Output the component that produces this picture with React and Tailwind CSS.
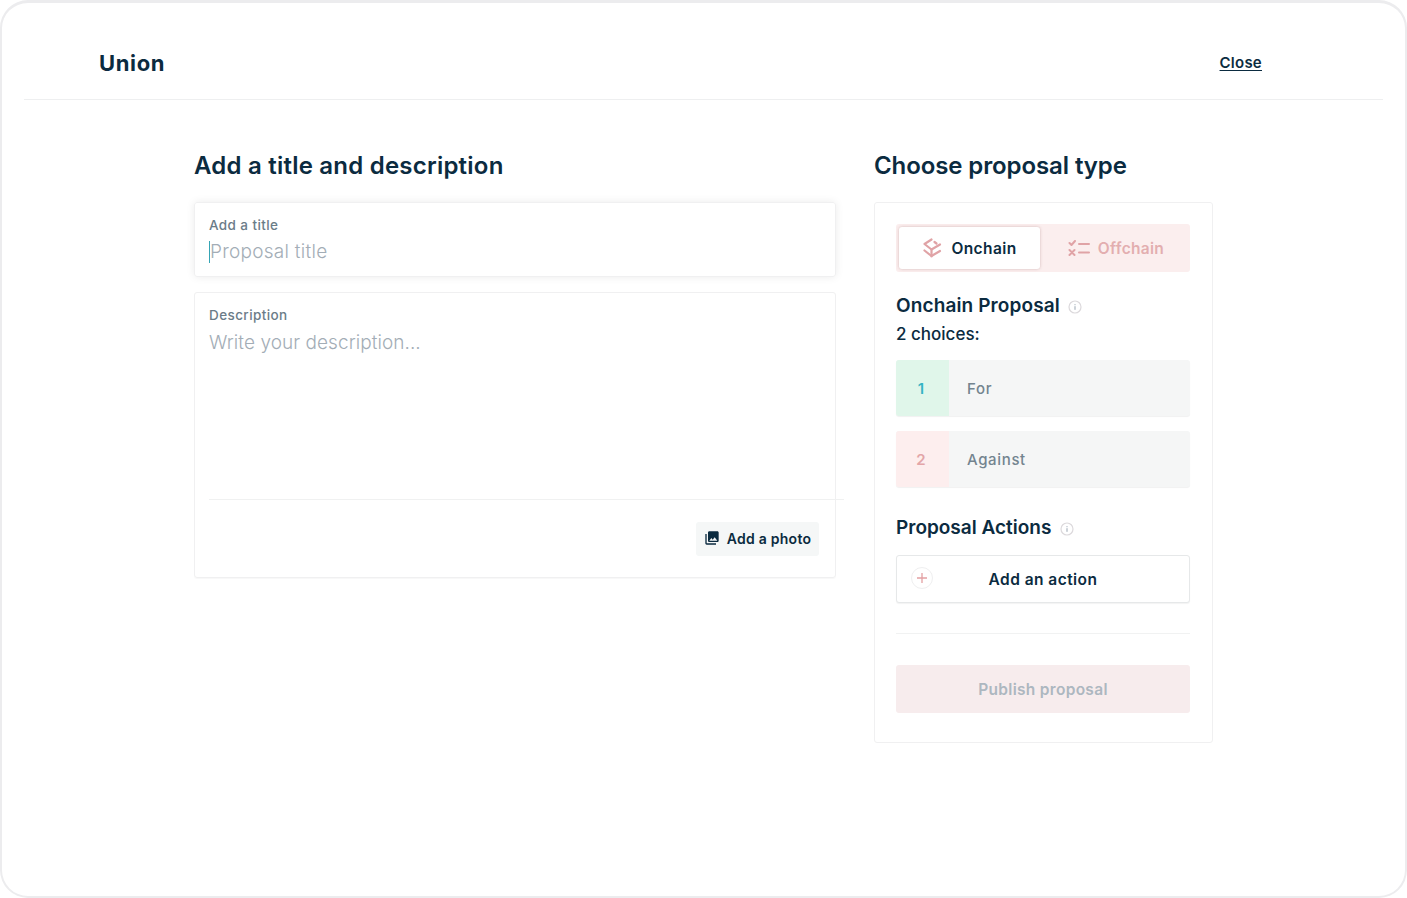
import React from "react";
import { MdPhotoLibrary } from "react-icons/md";

function Info() {
  return (
    <svg width="14" height="14" viewBox="0 0 14 14" fill="none">
      <circle cx="7" cy="7" r="6" stroke="#dcd9dc" strokeWidth="1.2" />
      <rect x="6.5" y="6.2" width="1" height="3.6" fill="#9aa5b1" />
      <rect x="6.5" y="4.2" width="1" height="1" fill="#9aa5b1" />
    </svg>
  );
}

function OnchainIcon() {
  return (
    <svg width="20" height="20" viewBox="0 0 20 20" fill="none" stroke="#e0a3a6" strokeWidth="2.2" strokeLinecap="round" strokeLinejoin="round">
      <path d="M9.5 1.5 L2.5 6 L9.5 11.5 L18 6.5" />
      <path d="M2.5 12.5 L9.5 18 L18 13" />
      <path d="M9.5 11.5 V18.5" />
      <path d="M12.5 4 L14.5 5.5" />
    </svg>
  );
}

function OffchainIcon() {
  return (
    <svg width="22" height="16" viewBox="0 0 22 16" fill="none" stroke="#e0a3a6" strokeWidth="2" strokeLinecap="round" strokeLinejoin="round">
      <path d="M1.5 3 L3.5 5 L7 1" />
      <path d="M1.5 10 L6.5 15 M6.5 10 L1.5 15" />
      <path d="M11 4 H21 M11 12.5 H21" />
    </svg>
  );
}

function Choice({ n, label, numBg, numColor }) {
  return (
    <div className="flex h-14 overflow-hidden rounded-[3px] bg-[#f5f6f6] shadow-[0_1px_1px_rgba(0,0,0,0.06)]">
      <div className={`flex w-[53px] items-center justify-center pt-[2px] pr-[3px] text-[15px] font-semibold ${numBg} ${numColor}`}>{n}</div>
      <div className="flex items-center pt-[2px] pl-[18px] text-[15px] font-medium tracking-[0.65px] text-[#73848f]">{label}</div>
    </div>
  );
}

export default function App() {
  return (
    <div className="h-[898px] w-[1407px] overflow-hidden rounded-[28px] border-2 border-t-[3px] border-[#ececee] bg-white px-[22px] font-['Inter','Noto_Sans',sans-serif] text-[#0b2b40]">
      <header className="flex h-[97px] items-center justify-between border-b border-[#eeeff0] pt-[24px] pr-[121px] pl-[75px]">
        <div className="text-[22px] font-bold tracking-[0.65px]">Union</div>
        <a className="text-[15px] font-semibold tracking-[0.25px] underline underline-offset-2">Close</a>
      </header>
      <main className="flex gap-[38px] pt-[50px] pl-[170px]">
        <section className="w-[642px]">
          <h2 className="h-[32px] text-[24px] leading-[32px] font-semibold tracking-[0.22px]">Add a title and description</h2>
          <div className="mt-[20px] h-[75px] rounded-[3px] border border-[#f0f0f1] px-[14px] pt-[13px] shadow-[0_0_8px_rgba(0,0,0,0.08)]">
            <div className="text-[13.5px] leading-[18px] font-medium tracking-[0.4px] text-[#6b7c88]">Add a title</div>
            <div className="mt-[6px] flex h-[24px] items-center">
              <span className="h-[22px] w-[1px] bg-[#35a5b5]"></span>
              <span className="text-[19px] font-light tracking-[0.27px] text-[#a3adb6]">Proposal title</span>
            </div>
          </div>
          <div className="mt-[15px] h-[286px] rounded-[3px] border border-[#f0f0f1] pt-[13px] shadow-[0_1px_1px_rgba(0,0,0,0.03)]">
            <div className="px-[14px] text-[13.5px] leading-[18px] font-medium tracking-[0.4px] text-[#6b7c88]">Description</div>
            <div className="mt-[7px] px-[14px] text-[19px] leading-[24px] font-light tracking-[0.06px] text-[#a3adb6]">Write your description...</div>
            <div className="mt-[144px] mr-[-9px] ml-[14px] border-t border-[#f0f1f1]"></div>
            <div className="flex justify-end pt-[22px] pr-[16px]">
              <button className="flex h-[34px] w-[123px] items-center justify-center gap-[7px] rounded-[3px] bg-[#f5f7f7] pb-[2px] text-[14px] font-semibold tracking-[0.25px]">
                <MdPhotoLibrary size={16} color="#0b2b40" />
                Add a photo
              </button>
            </div>
          </div>
        </section>
        <section className="w-[339px]">
          <h2 className="h-[32px] text-[24px] leading-[32px] font-semibold tracking-[-0.1px]">Choose proposal type</h2>
          <div className="mt-[20px] h-[541px] rounded-[3px] border border-[#f0f0f1] pt-[21px] pr-[22px] pl-[21px]">
            <div className="flex h-[48px] rounded-[3px] bg-[#fbeeee] p-[3px]">
              <div className="flex h-[42px] w-[141px] items-center justify-center gap-[9px] rounded-[3px] bg-white text-[15.5px] font-semibold tracking-[0.4px] shadow-[0_0_3px_rgba(120,60,60,0.3)]">
                <OnchainIcon />
                <span className="pt-[2px]">Onchain</span>
              </div>
              <div className="flex flex-1 items-center justify-center gap-[8px] pl-[5px] text-[15.5px] font-semibold tracking-[0.3px] text-[#e3aeb0]">
                <OffchainIcon />
                <span className="pt-[2px]">Offchain</span>
              </div>
            </div>
            <div className="mt-[21px] flex h-[24px] items-center gap-[8px] pt-[3px]">
              <span className="text-[19px] font-semibold tracking-[0.12px]">Onchain Proposal</span>
              <Info />
            </div>
            <div className="mt-[5px] h-[24px] text-[17px] leading-[24px] font-medium">2 choices:</div>
            <div className="mt-[14px] flex flex-col gap-[15px]">
              <Choice n="1" label="For" numBg="bg-[#e0f6ea]" numColor="text-[#35b4c4]" />
              <Choice n="2" label="Against" numBg="bg-[#fdeeee]" numColor="text-[#e3a5a8]" />
            </div>
            <div className="mt-[28px] flex h-[24px] items-center gap-[9px] pt-[3px]">
              <span className="text-[19px] font-semibold">Proposal Actions</span>
              <Info />
            </div>
            <button className="relative mt-[16px] flex h-[48px] w-full items-center justify-center rounded-[3px] border border-[#e6e8e9] bg-white pt-[2px] text-[15.5px] font-semibold tracking-[0.45px] shadow-[0_1px_1px_rgba(0,0,0,0.05)]">
              <span className="absolute top-[11px] left-[14px] flex h-[22px] w-[22px] items-center justify-center rounded-full border border-[#efeff0]">
                <svg width="12" height="12" viewBox="0 0 12 12" stroke="#e3a0a3" strokeWidth="1.3"><path d="M6 1V11M1 6H11" /></svg>
              </span>
              Add an action
            </button>
            <div className="mt-[30px] border-t border-[#f1f2f2]"></div>
            <button className="mt-[31px] h-[48px] w-full rounded-[3px] bg-[#f7eced] pt-[2px] text-[15.5px] font-semibold tracking-[0.3px] text-[#adb7c0]">Publish proposal</button>
          </div>
        </section>
      </main>
    </div>
  );
}
